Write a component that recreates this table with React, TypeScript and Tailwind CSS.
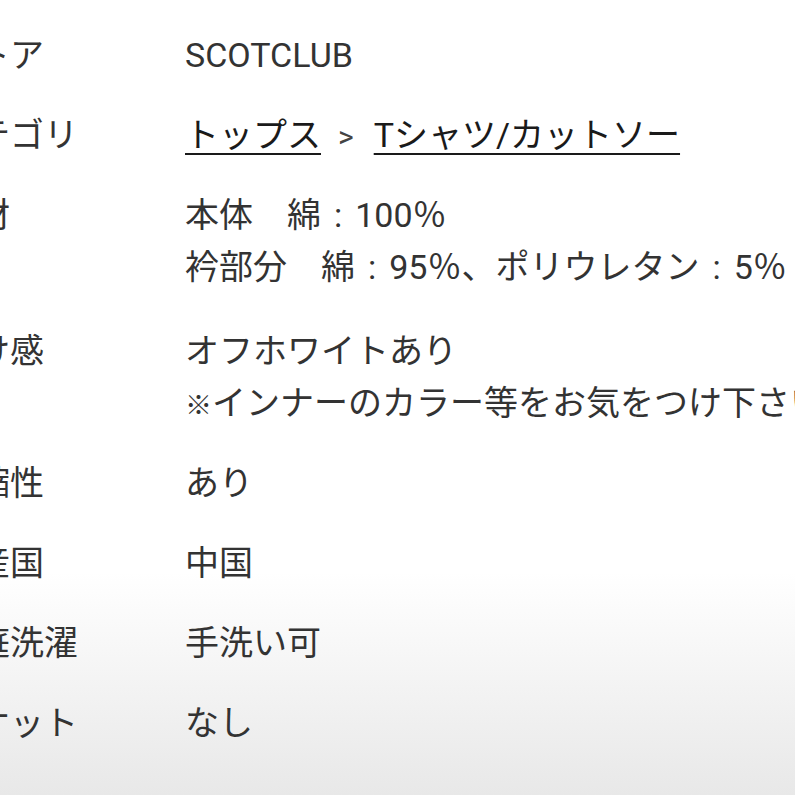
import React from "react";

const C = () => <span className="mx-[13px]">:</span>;

const rows: { label: string; lines: React.ReactNode[]; pad?: string }[] = [
  { label: "ストア", lines: ["SCOTCLUB"] },
  {
    label: "カテゴリ",
    lines: [
      <span key="c">
        <a className="underline decoration-2 underline-offset-[6px] text-[#1a1a1a]">トップス</a>
        <span className="text-[#444] text-[30px] leading-none ml-[17px] mr-[20px]">&gt;</span>
        <a className="underline decoration-2 underline-offset-[6px] text-[#1a1a1a]">Tシャツ/カットソー</a>
      </span>,
    ],
  },
  {
    label: "素材",
    pad: "pb-[18px]",
    lines: [
      <span key="a">本体　綿<C />100％</span>,
      <span key="b">衿部分　綿<C />95％、ポリウレタン<C />5％</span>,
    ],
  },
  {
    label: "透け感",
    lines: [
      "オフホワイトあり",
      <span key="n">
        <span className="text-[27px] leading-none font-bold">※</span>インナーのカラー等をお気をつけ下さい
      </span>,
    ],
  },
  { label: "伸縮性", lines: ["あり"] },
  { label: "原産国", lines: ["中国"] },
  { label: "家庭洗濯", lines: ["手洗い可"] },
  { label: "ポケット", lines: ["なし"] },
];

export default function App() {
  return (
    <div
      className="w-[795px] h-[795px] overflow-hidden bg-linear-to-b from-white from-72% to-[#e8e8e8] text-[#333] text-[34px] leading-[52px]"
      style={{ fontFamily: 'Roboto, "Noto Sans CJK JP", sans-serif' }}
    >
      <div className="ml-[-58px] pt-[15px] flex flex-col">
        {rows.map((r) => (
          <div key={r.label} className={`flex pt-[14px] ${r.pad ?? "pb-[14px]"}`}>
            <div className="w-[243px] shrink-0 whitespace-nowrap">{r.label}</div>
            <div className="flex flex-col whitespace-nowrap">
              {r.lines.map((l, i) => (
                <div key={i} className="h-[52px]">{l}</div>
              ))}
            </div>
          </div>
        ))}
      </div>
    </div>
  );
}
